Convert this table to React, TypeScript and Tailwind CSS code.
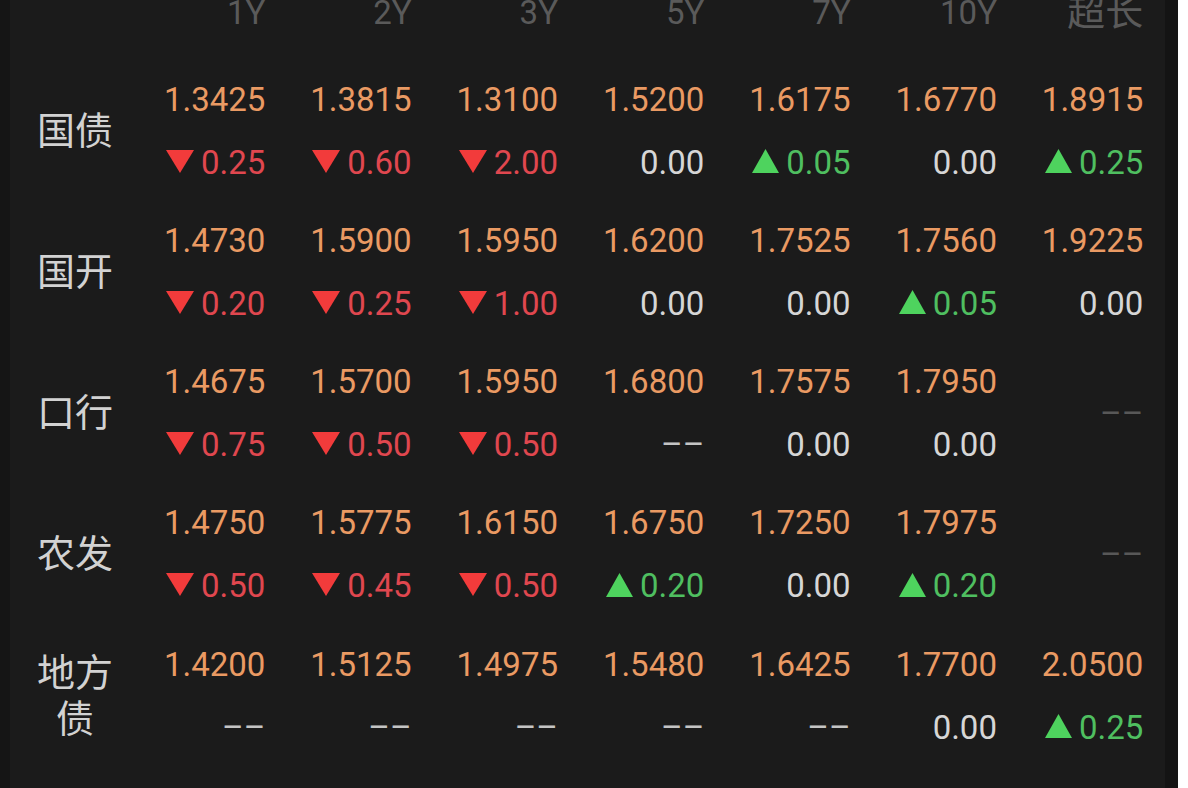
import React from "react";

type Chg = { dir: "up" | "down" | "flat" | "none"; v: string } | null;

const rows: { label: string; values: (string | null)[]; changes: Chg[] }[] = [
  {
    label: "国债",
    values: ["1.3425", "1.3815", "1.3100", "1.5200", "1.6175", "1.6770", "1.8915"],
    changes: [
      { dir: "down", v: "0.25" },
      { dir: "down", v: "0.60" },
      { dir: "down", v: "2.00" },
      { dir: "flat", v: "0.00" },
      { dir: "up", v: "0.05" },
      { dir: "flat", v: "0.00" },
      { dir: "up", v: "0.25" },
    ],
  },
  {
    label: "国开",
    values: ["1.4730", "1.5900", "1.5950", "1.6200", "1.7525", "1.7560", "1.9225"],
    changes: [
      { dir: "down", v: "0.20" },
      { dir: "down", v: "0.25" },
      { dir: "down", v: "1.00" },
      { dir: "flat", v: "0.00" },
      { dir: "flat", v: "0.00" },
      { dir: "up", v: "0.05" },
      { dir: "flat", v: "0.00" },
    ],
  },
  {
    label: "口行",
    values: ["1.4675", "1.5700", "1.5950", "1.6800", "1.7575", "1.7950", null],
    changes: [
      { dir: "down", v: "0.75" },
      { dir: "down", v: "0.50" },
      { dir: "down", v: "0.50" },
      { dir: "none", v: "––" },
      { dir: "flat", v: "0.00" },
      { dir: "flat", v: "0.00" },
      null,
    ],
  },
  {
    label: "农发",
    values: ["1.4750", "1.5775", "1.6150", "1.6750", "1.7250", "1.7975", null],
    changes: [
      { dir: "down", v: "0.50" },
      { dir: "down", v: "0.45" },
      { dir: "down", v: "0.50" },
      { dir: "up", v: "0.20" },
      { dir: "flat", v: "0.00" },
      { dir: "up", v: "0.20" },
      null,
    ],
  },
  {
    label: "地方债",
    values: ["1.4200", "1.5125", "1.4975", "1.5480", "1.6425", "1.7700", "2.0500"],
    changes: [
      { dir: "none", v: "––" },
      { dir: "none", v: "––" },
      { dir: "none", v: "––" },
      { dir: "none", v: "––" },
      { dir: "none", v: "––" },
      { dir: "flat", v: "0.00" },
      { dir: "up", v: "0.25" },
    ],
  },
];

const headers = ["1Y", "2Y", "3Y", "5Y", "7Y", "10Y", "超长"];

function Down() {
  return (
    <svg width="28" height="23" viewBox="0 0 28 23" className="mr-[7px] mb-[2px]">
      <polygon points="0,0 28,0 14,23" fill="#f23b3b" />
    </svg>
  );
}

function Up() {
  return (
    <svg width="27" height="24" viewBox="0 0 27 24" className="mr-[7px] mb-[2px]">
      <polygon points="13.5,0 27,24 0,24" fill="#4ed35e" />
    </svg>
  );
}

function Change({ c }: { c: Chg }) {
  if (!c) return null;
  if (c.dir === "down")
    return (
      <div className="flex h-[63px] items-center text-[#e0474f]">
        <Down />
        <span>{c.v}</span>
      </div>
    );
  if (c.dir === "up")
    return (
      <div className="flex h-[63px] items-center text-[#4fbf60]">
        <Up />
        <span>{c.v}</span>
      </div>
    );
  if (c.dir === "none") return <div className="h-[63px] text-[#c4c4c4]">{c.v}</div>;
  return <div className="h-[63px] text-[#d6d6d6]">{c.v}</div>;
}

export default function App() {
  return (
    <div className="w-[1188px] h-[788px] overflow-hidden flex bg-white font-[Roboto,'Noto_Sans_CJK_SC',sans-serif]">
      <div className="w-[10px] bg-[#151515]" />
      <div className="w-[1155px] bg-[#1b1b1b] flex flex-col text-[33px] leading-[63px]">
        <div className="flex mt-[-19px] h-[63px] text-[#5a5a5a]">
          <div className="w-[130px]" />
          {headers.map((h) => (
            <div
              key={h}
              className={`w-[146.33px] pr-[21px] text-right ${h === "超长" ? "text-[38px]" : ""}`}
            >
              {h}
            </div>
          ))}
        </div>
        <div className="flex flex-col mt-[23.5px] gap-[15.25px]">
          {rows.map((r) => (
            <div key={r.label} className="flex h-[126px]">
              <div className="w-[130px] flex items-center justify-center">
                <div className="w-[80px] text-center text-[38px] leading-[46px] text-[#d2d2d2]">
                  {r.label}
                </div>
              </div>
              {r.values.map((v, i) =>
                v === null ? (
                  <div
                    key={i}
                    className="w-[146.33px] pr-[21px] flex items-center justify-end text-[#585858]"
                  >
                    ––
                  </div>
                ) : (
                  <div key={i} className="w-[146.33px] pr-[21px] flex flex-col items-end">
                    <div className="h-[63px] text-[#ea9a63]">{v}</div>
                    <Change c={r.changes[i]} />
                  </div>
                )
              )}
            </div>
          ))}
        </div>
      </div>
      <div className="w-[13px] bg-[#141414]" />
    </div>
  );
}
